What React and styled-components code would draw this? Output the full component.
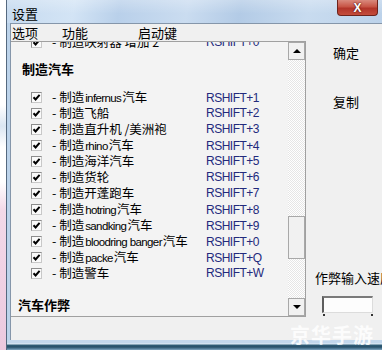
import styled, { createGlobalStyle } from 'styled-components';

//= data =//
const cars = [
  { pre: '', lat: 'infernus', post: '汽车', key: 'RSHIFT+1' },
  { pre: '飞船', lat: '', post: '', key: 'RSHIFT+2' },
  { pre: '直升机 /美洲袍', lat: '', post: '', key: 'RSHIFT+3' },
  { pre: '', lat: 'rhino', post: '汽车', key: 'RSHIFT+4' },
  { pre: '海洋汽车', lat: '', post: '', key: 'RSHIFT+5' },
  { pre: '货轮', lat: '', post: '', key: 'RSHIFT+6' },
  { pre: '开蓬跑车', lat: '', post: '', key: 'RSHIFT+7' },
  { pre: '', lat: 'hotring', post: '汽车', key: 'RSHIFT+8' },
  { pre: '', lat: 'sandking', post: '汽车', key: 'RSHIFT+9' },
  { pre: '', lat: 'bloodring banger', post: '汽车', key: 'RSHIFT+0' },
  { pre: '', lat: 'packe', post: '汽车', key: 'RSHIFT+Q' },
  { pre: '警车', lat: '', post: '', key: 'RSHIFT+W' },
];

const scroll = { track: 237, thumb: 43, pos: 156 };

//= styling =//
const GlobalStyle = createGlobalStyle`
  html, body { margin: 0; padding: 0; }
  body {
    width: 382px;
    height: 350px;
    overflow: hidden;
    background: #fff;
    font-family: "Noto Sans CJK SC", "Liberation Sans", sans-serif;
    color: #000;
  }
`;

const Screen = styled.div`
  position: relative;
  display: flex;
  width: 382px;
  height: 350px;
  overflow: hidden;
`;

const Behind = styled.div`
  width: 6px;
  flex: none;
  background: linear-gradient(#fff 0, #fff 30%, #dbe6f2 36%, #fff 42%, #fff 52%, #f3d9e8 60%, #ecc9df 100%);
`;

const Win = styled.div`
  flex: 1;
  min-width: 0;
  display: flex;
  flex-direction: column;
  border-left: 1px solid #55697f;
  background: #bcd3ea;
`;

const TitleBar = styled.div`
  height: 23px;
  flex: none;
  display: flex;
  align-items: flex-start;
  padding-left: 5px;
  background:
    linear-gradient(180deg, rgba(255,255,255,0.25), rgba(255,255,255,0) 60%),
    linear-gradient(100deg, #c6daef 0%, #d3e4f5 18%, #b9d0ea 30%, #cadcf0 48%, #b3cbe6 62%, #c8dbef 80%, #bcd2ea 100%);
`;

const Title = styled.span`
  font-size: 13px;
  line-height: 28px;
`;

const CloseBtn = styled.div`
  margin-left: auto;
  margin-right: 4px;
  width: 41px;
  height: 16px;
  display: flex;
  align-items: center;
  justify-content: center;
  box-sizing: border-box;
  border: 1px solid #6e231c;
  border-top: none;
  border-radius: 0 0 4px 4px;
  background: linear-gradient(#d98a7e 0%, #c75445 45%, #b2352a 55%, #c44d3c 100%);
  color: #fff;
  font: bold 12px "Liberation Sans", sans-serif;
  text-shadow: 0 0 2px #5a1510, 0 0 1px #5a1510;
`;

const Frame = styled.div`
  flex: 1;
  display: flex;
  padding-left: 3px;
  min-height: 0;
`;

const Client = styled.div`
  flex: 1;
  min-width: 0;
  display: flex;
  flex-direction: column;
  background: #f0f0f0;
  border-left: 1px solid #8596aa;
  border-top: 1px solid #8596aa;
`;

const MenuBar = styled.div`
  height: 17px;
  flex: none;
  display: flex;
  padding-left: 1px;
`;

const MenuItem = styled.span`
  width: ${(p) => p.$w || 'auto'};
  font-size: 13px;
  line-height: 18px;
  height: 17px;
  overflow: hidden;
`;

const Body = styled.div`
  flex: 1;
  display: flex;
  align-items: flex-start;
`;

const ListPane = styled.div`
  width: 295px;
  height: 276px;
  flex: none;
  box-sizing: border-box;
  display: flex;
  border-top: 1px solid #a0a0a0;
  border-bottom: 1px solid #a0a0a0;
  border-right: 1px solid #a0a0a0;
  background: #f3f3f3;
`;

const ListContent = styled.div`
  flex: 1;
  overflow: hidden;
`;

const ListInner = styled.div`
  margin-top: -8px;
  display: flex;
  flex-direction: column;
`;

const Header = styled.div`
  height: 16px;
  margin-top: ${(p) => p.$top}px;
  padding-left: ${(p) => p.$indent}px;
  font-size: 13px;
  font-weight: bold;
  line-height: 16px;
`;

const Rows = styled.div`
  margin-top: 12px;
  display: flex;
  flex-direction: column;
`;

const Row = styled.div`
  height: 16px;
  display: grid;
  grid-template-columns: 11px 144px auto;
  column-gap: 10px;
  align-items: center;
  padding-left: 20px;
  font-size: 12.5px;
  line-height: 16px;
  white-space: nowrap;
`;

const Check = styled.span`
  width: 11px;
  height: 11px;
  box-sizing: border-box;
  border: 1px solid #8c8c8c;
  border-right-color: #c8c8c8;
  border-bottom-color: #c8c8c8;
  background: #fafafa;
  display: flex;
  align-items: center;
  justify-content: center;
`;

const Label = styled.span`
  overflow: visible;
`;

const Lat = styled.span`
  font-family: "Liberation Sans", sans-serif;
  font-size: 11.5px;
  letter-spacing: -0.6px;
  margin: 0 1px;
`;

const Key = styled.span`
  font-family: "Liberation Sans", sans-serif;
  font-size: 12px;
  letter-spacing: -0.5px;
  color: #232a7c;
`;

const ScrollBar = styled.div`
  width: 17px;
  flex: none;
  display: flex;
  flex-direction: column;
  background: repeating-conic-gradient(#ffffff 0 25%, #e6e6e6 0 50%) 0 0 / 2px 2px;
`;

const ScrollBtn = styled.div`
  height: 18px;
  flex: none;
  box-sizing: border-box;
  border: 1px solid #a8a8a8;
  background: #f1f1f1;
  display: flex;
  align-items: center;
  justify-content: center;
  &::after {
    content: '';
    border-left: 4px solid transparent;
    border-right: 4px solid transparent;
    ${(p) => (p.$down ? 'border-top: 4px solid #000;' : 'border-bottom: 4px solid #000;')}
  }
`;

const Track = styled.div`
  flex: 1;
`;

const Thumb = styled.div`
  height: ${(p) => p.$h}px;
  box-sizing: border-box;
  border: 1px solid #a8a8a8;
  background: #f1f1f1;
`;

const SidePane = styled.div`
  flex: 1;
  min-width: 0;
  overflow: hidden;
  display: flex;
  flex-direction: column;
  padding: 4px 0 0 9px;
  white-space: nowrap;
`;

const SideButton = styled.div`
  margin: ${(p) => p.$top}px 0 0 18px;
  font-size: 13px;
  line-height: 16px;
`;

const SpeedLabel = styled.div`
  margin-top: 160px;
  font-size: 13px;
  line-height: 16px;
`;

const SpeedBox = styled.div`
  margin: 10px 0 0 7px;
  width: 51px;
  height: 17px;
  box-sizing: border-box;
  border-left: 2px solid #5e5e5e;
  border-top: 2px solid #7a7a7a;
  border-right: 1px solid #dcdcdc;
  border-bottom: 1px solid #dcdcdc;
  background: #fdfdfd;
`;

const Ticks = styled.div`
  margin: 1px 0 0 8px;
  width: 50px;
  display: flex;
  justify-content: space-between;
  span {
    width: 2px;
    height: 2px;
    background: #333;
  }
`;

const BottomFrame = styled.div`
  height: 10px;
  flex: none;
  background: linear-gradient(#c2d7ec 0, #c2d7ec 3px, #e2edf7 4px, #2f5e78 5px, #274f68 7px, #5b86a3 9px, #88a9c2 10px);
`;

const Watermark = styled.div`
  position: absolute;
  left: 290px;
  top: 320px;
  font-size: 20px;
  font-weight: bold;
  letter-spacing: 1px;
  color: rgba(255, 255, 255, 0.85);
  pointer-events: none;
`;

//= component definition =//
function CheckMark() {
  return (
    <svg width="9" height="9" viewBox="0 0 9 9">
      <path d="M1.5 4.2 L3.6 6.4 L7.6 1.8" fill="none" stroke="#000" strokeWidth="2" />
    </svg>
  );
}

function CarRow({ item }) {
  return (
    <Row>
      <Check><CheckMark /></Check>
      <Label>
        - 制造{item.pre}
        {item.lat && <Lat>{item.lat}</Lat>}
        {item.post}
      </Label>
      <Key>{item.key}</Key>
    </Row>
  );
}

export default function App() {
  return (
    <Screen>
      <GlobalStyle />
      <Behind />
      <Win>
        <TitleBar>
          <Title>设置</Title>
          <CloseBtn>X</CloseBtn>
        </TitleBar>
        <Frame>
          <Client>
            <MenuBar>
              <MenuItem $w="50px">选项</MenuItem>
              <MenuItem $w="76px">功能</MenuItem>
              <MenuItem>启动键</MenuItem>
            </MenuBar>
            <Body>
              <ListPane>
                <ListContent>
                  <ListInner>
                    <CarRow item={{ pre: '映射器 增加 2', lat: '', post: '', key: 'RSHIFT+0' }} />
                    <Header $top={11} $indent={11}>制造汽车</Header>
                    <Rows>
                      {cars.map((c) => (
                        <CarRow key={c.key} item={c} />
                      ))}
                    </Rows>
                    <Header $top={16} $indent={7}>汽车作弊</Header>
                  </ListInner>
                </ListContent>
                <ScrollBar>
                  <ScrollBtn />
                  <Track>
                    <Thumb $h={scroll.thumb} style={{ marginTop: scroll.pos }} />
                  </Track>
                  <ScrollBtn $down />
                </ScrollBar>
              </ListPane>
              <SidePane>
                <SideButton $top={0}>确定</SideButton>
                <SideButton $top={33}>复制</SideButton>
                <SpeedLabel>作弊输入速度</SpeedLabel>
                <SpeedBox />
                <Ticks><span /><span /></Ticks>
              </SidePane>
            </Body>
          </Client>
        </Frame>
        <BottomFrame />
      </Win>
      <Watermark>京华手游</Watermark>
    </Screen>
  );
}
